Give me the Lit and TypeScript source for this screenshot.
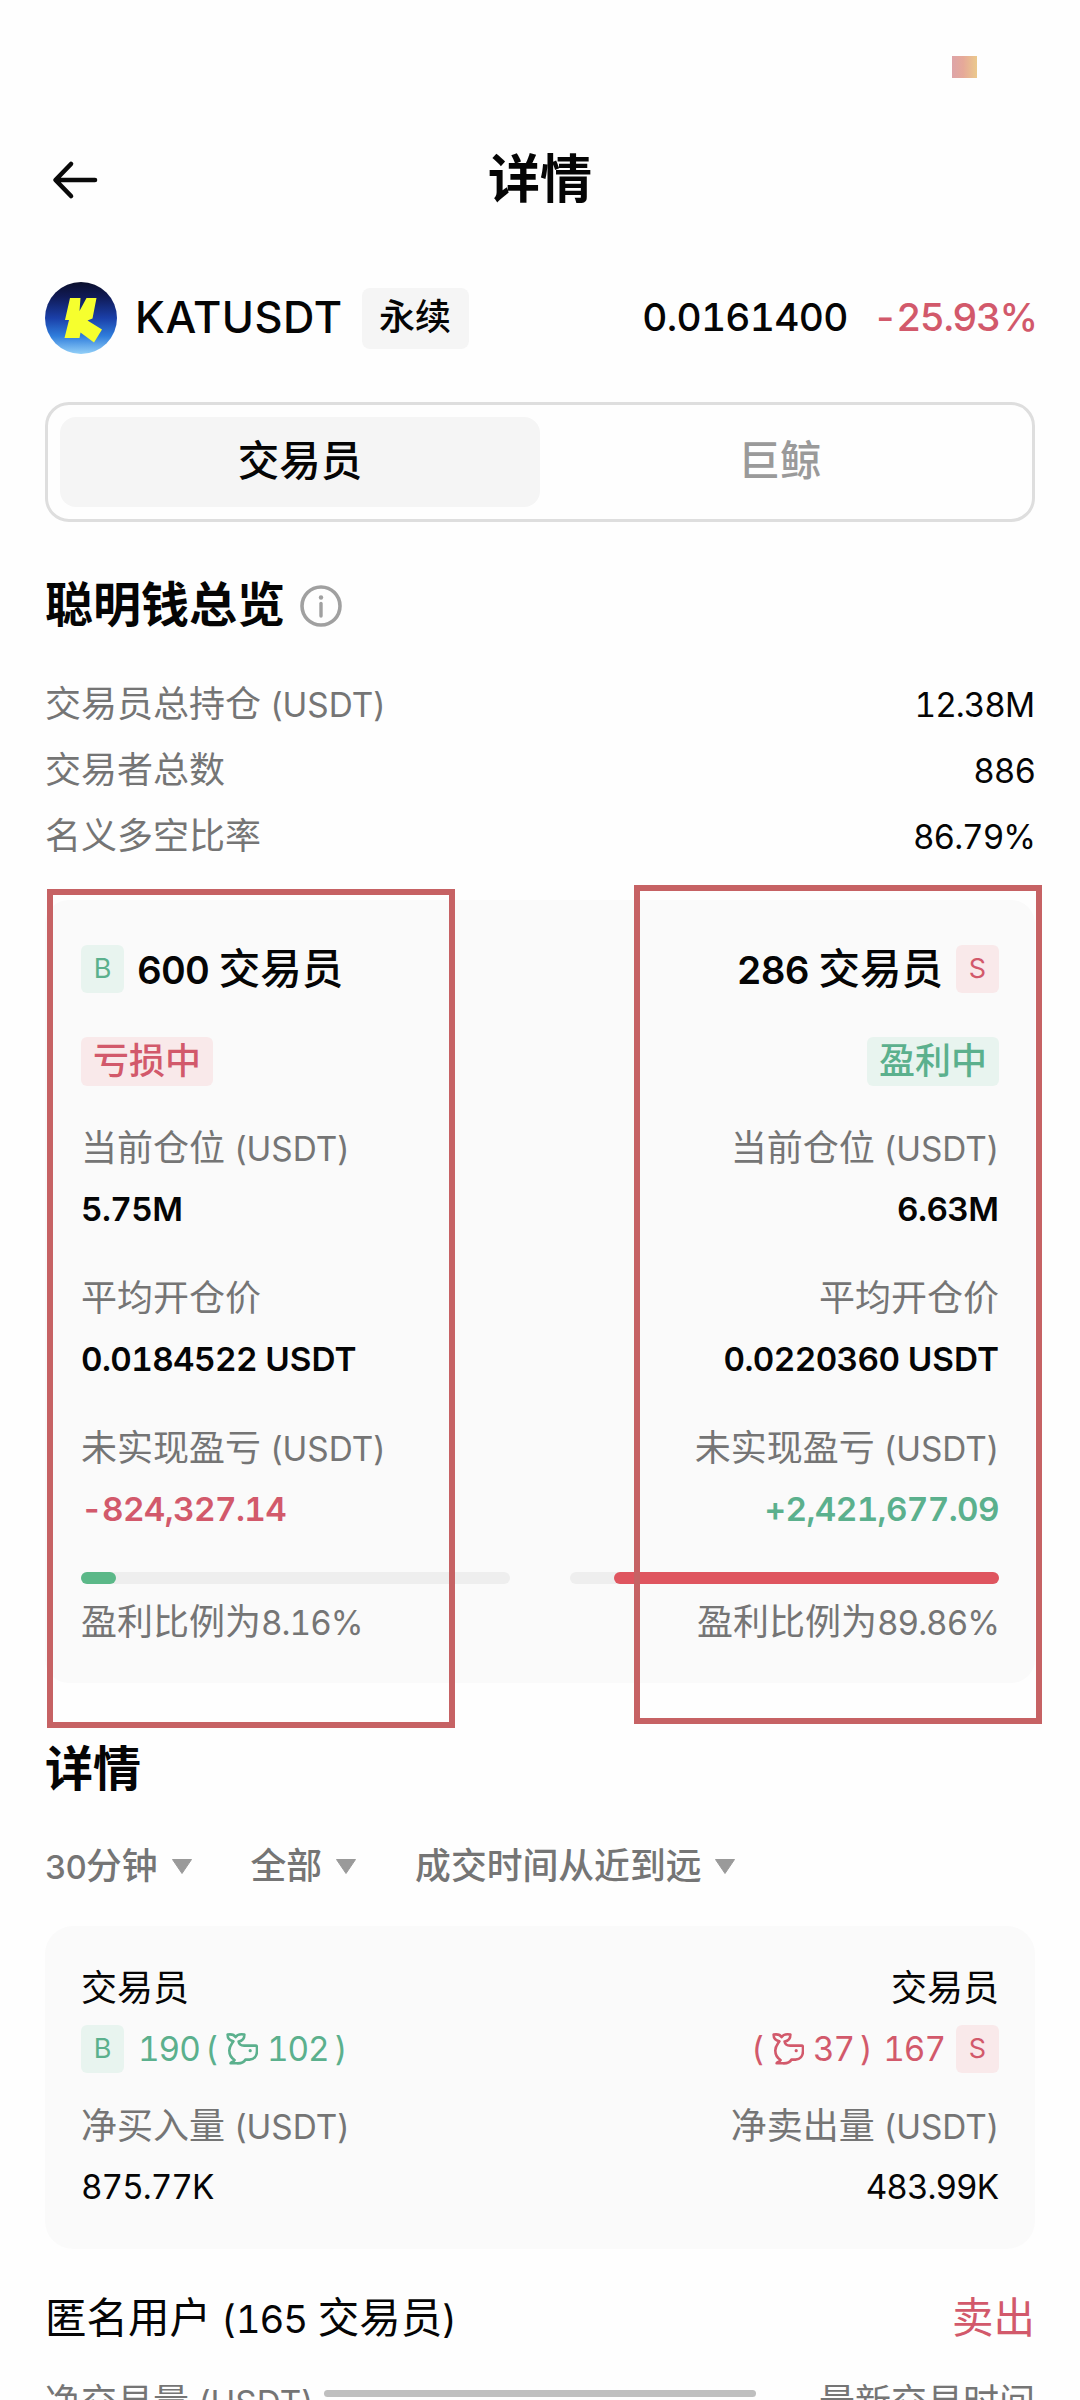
import { LitElement, html, css, svg } from "lit";
import { customElement, property } from "lit/decorators.js";
import { classMap } from "lit/directives/class-map.js";

/** Splits a text into CJK, numeric and Latin runs so that each kind gets its own metrics. */
const mix = (text: string) =>
  text
    .split(/([\u3400-\u9fff]+|[0-9.,%+-]+)/)
    .filter((run) => run.length > 0)
    .map((run) =>
      /[\u3400-\u9fff]/.test(run)
        ? run
        : html`<span class=${classMap({ latin: true, digits: /[0-9]/.test(run) })}>${run}</span>`
    );

const shared = css`
  * {
    box-sizing: border-box;
  }
  .latin {
    font-family: Inter, "Open Sans", sans-serif;
    font-size: 0.925em;
    line-height: 0;
    white-space: pre;
  }
  .digits {
    font-variant-numeric: tabular-nums;
    letter-spacing: -0.03em;
  }
`;

const whale = svg`
  <path d="M1.6 1.6C5 1 8 1.4 9.6 4.2C11.2 1.4 15 1 18.4 1.6C18.4 5.2 16.6 8 12.6 8.6C13 11 15 12.6 18 12.6H29.4C30.4 12.6 31 13.2 31 14.2V18C31 23 28 26.6 23.5 26.6H19.4C18 29.4 15 30.6 10.5 30.3H4.6C5.4 28.4 8 28.8 8.6 27C4.6 24.6 3.3 21 3.3 17.5C3.3 13.4 5.6 11.2 7.4 8.3C3.6 7.6 1.6 5.2 1.6 1.6Z"
    fill="none" stroke="currentColor" stroke-width="2.6" stroke-linejoin="round"/>
  <circle cx="24.2" cy="17.7" r="1.6" fill="currentColor"/>`;

@customElement("side-badge")
class SideBadge extends LitElement {
  @property() side = "B";
  static styles = css`
    :host {
      display: block;
    }
    .badge {
      width: 43px;
      height: 48px;
      border-radius: 6px;
      display: flex;
      align-items: center;
      justify-content: center;
      font-family: Inter, "Open Sans", sans-serif;
      font-size: 27px;
      font-weight: 400;
      line-height: 48px;
    }
    .buy {
      background: #e8f4ef;
      color: #5bb08d;
    }
    .sell {
      background: #f9e9ea;
      color: #d2596b;
    }
  `;
  render() {
    const buy = this.side === "B";
    return html`<div class=${classMap({ badge: true, buy, sell: !buy })}>${this.side}</div>`;
  }
}

interface Side {
  side: string;
  count: string;
  status: string;
  gain: boolean;
  position: string;
  entry: string;
  pnl: string;
  ratio: number;
}

@customElement("side-column")
class SideColumn extends LitElement {
  @property({ attribute: false }) data!: Side;
  static styles = [
    shared,
    css`
      :host {
        display: block;
        flex: 1;
      }
      .col {
        display: flex;
        flex-direction: column;
        align-items: flex-start;
      }
      .short {
        align-items: flex-end;
      }
      .head {
        display: flex;
        align-items: center;
        gap: 13px;
        height: 49px;
        line-height: 47px;
        font-size: 41.5px;
        font-weight: 500;
        white-space: nowrap;
      }
      .short .head {
        flex-direction: row-reverse;
      }
      .head .latin {
        font-weight: 600;
      }
      .head .digits {
        letter-spacing: -0.022em;
      }
      .tag {
        margin-top: 44px;
        height: 49px;
        line-height: 47px;
        padding: 0 12px;
        border-radius: 6px;
        font-size: 36px;
        font-weight: 500;
      }
      .tag.gain {
        background: #e8f4ef;
      }
      .tag.loss {
        background: #f9e9ea;
      }
      .gain {
        color: #5bb08d;
      }
      .loss {
        color: #d2596b;
      }
      .metrics {
        margin-top: 32px;
        display: flex;
        flex-direction: column;
        gap: 30px;
        align-items: inherit;
      }
      .metric {
        display: flex;
        flex-direction: column;
        align-items: inherit;
        line-height: 60px;
      }
      .label,
      .ratio {
        height: 60px;
        font-size: 36px;
        color: #757575;
        white-space: nowrap;
      }
      .value {
        height: 60px;
        font-size: 36px;
        font-weight: 600;
      }
      .value .digits {
        letter-spacing: -0.018em;
      }
      .bar {
        margin-top: 34px;
        width: 100%;
        height: 12px;
        border-radius: 6px;
        background: #eeeeee;
        display: flex;
      }
      .short .bar {
        justify-content: flex-end;
      }
      .fill {
        border-radius: 6px;
        background: #5bb888;
      }
      .short .fill {
        background: #df555f;
      }
      .ratio {
        margin-top: 8px;
        line-height: 60px;
      }
    `,
  ];
  render() {
    const d = this.data;
    const tone = { gain: d.gain, loss: !d.gain };
    return html`<div class=${classMap({ col: true, short: d.side === "S" })}>
      <div class="head">
        <side-badge side=${d.side}></side-badge>
        <div>${mix(`${d.count} 交易员`)}</div>
      </div>
      <div class=${classMap({ tag: true, ...tone })}>${d.status}</div>
      <div class="metrics">
        <div class="metric">
          <div class="label">${mix("当前仓位 (USDT)")}</div>
          <div class="value">${mix(d.position)}</div>
        </div>
        <div class="metric">
          <div class="label">${mix("平均开仓价")}</div>
          <div class="value">${mix(d.entry)}</div>
        </div>
        <div class="metric">
          <div class="label">${mix("未实现盈亏 (USDT)")}</div>
          <div class=${classMap({ value: true, ...tone })}>${mix(d.pnl)}</div>
        </div>
      </div>
      <div class="bar"><div class="fill" style="width:${d.ratio}%"></div></div>
      <div class="ratio">${mix(`盈利比例为${d.ratio}%`)}</div>
    </div>`;
  }
}

@customElement("app-root")
class AppRoot extends LitElement {
  static styles = [
    shared,
    css`
      :host {
        display: block;
        position: relative;
        width: 1080px;
        height: 2400px;
        overflow: hidden;
        background: #fefefe;
        color: #050505;
        font-family: "Open Sans", "Noto Sans CJK SC", sans-serif;
        font-size: 36px;
      }
      .page {
        display: flex;
        flex-direction: column;
        padding: 0 45px;
      }
      .status {
        height: 118px;
        display: flex;
        justify-content: flex-end;
        padding: 56px 58px 0 0;
      }
      .pixel {
        width: 25px;
        height: 22px;
        background: linear-gradient(90deg, #dda4a8, #e6a999 45%, #ebc98c);
      }
      .header {
        height: 120px;
        display: grid;
        grid-template-columns: 1fr auto 1fr;
        align-items: center;
      }
      .back {
        width: 60px;
        height: 60px;
      }
      .title {
        font-size: 52px;
        font-weight: 700;
        line-height: 76px;
      }
      .pair {
        height: 160px;
        display: flex;
        align-items: center;
        line-height: 60px;
      }
      .logo {
        width: 72px;
        height: 72px;
      }
      .symbol {
        margin-left: 18px;
        padding-bottom: 6px;
        font-size: 47px;
        font-weight: 500;
        letter-spacing: 0.5px;
      }
      .perp {
        margin-left: 19px;
        width: 107px;
        height: 61px;
        line-height: 58px;
        text-align: center;
        background: #f5f5f5;
        border-radius: 8px;
        font-weight: 500;
      }
      .price {
        margin-left: auto;
        padding-bottom: 6px;
        font-size: 42px;
        font-weight: 500;
      }
      .price .digits {
        letter-spacing: -0.018em;
      }
      .change {
        margin-left: 25px;
        padding-bottom: 6px;
        font-size: 42px;
        font-weight: 500;
        color: #d2596b;
      }
      .change .digits {
        letter-spacing: -0.04em;
        margin-right: -0.04em;
      }
      .tabs {
        margin-top: 4px;
        height: 120px;
        border: 3px solid #dedede;
        border-radius: 24px;
        padding: 12px;
        display: flex;
      }
      .tab {
        flex: 1;
        border-radius: 16px;
        text-align: center;
        line-height: 86px;
        font-size: 41.5px;
        font-weight: 500;
        color: #9a9a9a;
      }
      .tab.active {
        background: #f5f5f5;
        color: #050505;
      }
      .section {
        height: 60px;
        line-height: 60px;
        font-size: 48px;
        font-weight: 700;
        display: flex;
        align-items: center;
        gap: 15px;
      }
      .overview {
        margin-top: 52px;
      }
      .info {
        width: 42px;
        height: 42px;
        margin-top: 4px;
      }
      .stats {
        margin-top: 37px;
      }
      .stat {
        height: 66px;
        line-height: 66px;
        display: flex;
        justify-content: space-between;
      }
      .muted {
        color: #757575;
      }
      .compare {
        position: relative;
        margin-top: 31px;
        height: 783px;
        padding: 44px 36px 0;
        border-radius: 24px;
        background: #fafafa;
        display: flex;
        gap: 60px;
      }
      .frame {
        position: absolute;
        width: 408px;
        height: 839px;
        border: 6px solid #c66264;
      }
      .frame-long {
        left: 2px;
        top: -11px;
      }
      .frame-short {
        left: 589px;
        top: -15px;
      }
      .details {
        margin-top: 55px;
      }
      .filters {
        margin-top: 37px;
        height: 60px;
        line-height: 60px;
        display: flex;
        gap: 58px;
        color: #757575;
        font-weight: 500;
        font-size: 35.8px;
      }
      .filter {
        display: flex;
        align-items: center;
        gap: 13px;
      }
      .caret {
        width: 22px;
        height: 15px;
        margin-top: 3px;
      }
      .flow {
        margin-top: 31px;
        height: 323px;
        padding: 32px 36px 0;
        border-radius: 28px;
        background: #fafafa;
        display: flex;
        justify-content: space-between;
        line-height: 60px;
      }
      .side {
        display: flex;
        flex-direction: column;
      }
      .side.end {
        align-items: flex-end;
      }
      .tally {
        height: 61px;
        display: flex;
        align-items: center;
      }
      .tally span {
        padding-bottom: 2px;
      }
      .buy {
        color: #5bb08d;
      }
      .sell {
        color: #d2596b;
      }
      .whale {
        width: 32px;
        height: 32px;
        margin: 0 9px 0 8px;
      }
      .gap-l {
        margin-left: 14px;
      }
      .gap-m {
        margin-left: 11px;
      }
      .gap-s {
        margin-left: 6px;
      }
      .flow-label {
        margin-top: 17px;
      }
      .user {
        margin-top: 38px;
        height: 60px;
        line-height: 60px;
        font-size: 41.5px;
        display: flex;
        justify-content: space-between;
      }
      .last {
        margin-top: 25px;
        height: 28px;
        line-height: 60px;
        display: flex;
        justify-content: space-between;
      }
      .home {
        position: absolute;
        left: 324px;
        bottom: 3px;
        width: 432px;
        height: 7px;
        border-radius: 4px;
        background: #bfbfbf;
      }
    `,
  ];

  private sides: Side[] = [
    {
      side: "B",
      count: "600",
      status: "亏损中",
      gain: false,
      position: "5.75M",
      entry: "0.0184522 USDT",
      pnl: "-824,327.14",
      ratio: 8.16,
    },
    {
      side: "S",
      count: "286",
      status: "盈利中",
      gain: true,
      position: "6.63M",
      entry: "0.0220360 USDT",
      pnl: "+2,421,677.09",
      ratio: 89.86,
    },
  ];

  private stats = [
    ["交易员总持仓 (USDT)", "12.38M"],
    ["交易者总数", "886"],
    ["名义多空比率", "86.79%"],
  ];

  private filters = ["30分钟", "全部", "成交时间从近到远"];

  render() {
    return html`
      <div class="page">
        <div class="status"><div class="pixel"></div></div>
        <div class="header">
          <svg class="back" viewBox="0 0 60 60" fill="none" stroke="#0a0a0a" stroke-width="4.6" stroke-linecap="round" stroke-linejoin="round">
            <path d="M26 16L10.500 32L26 48M11 32H50" />
          </svg>
          <div class="title">详情</div>
        </div>
        <div class="pair">
          <svg class="logo" viewBox="0 0 72 72">
            <defs>
              <linearGradient id="sky" x1="0" y1="0" x2="0" y2="1">
                <stop offset="0" stop-color="#0b0f2c" />
                <stop offset="0.2" stop-color="#101a55" />
                <stop offset="0.5" stop-color="#1a3fa8" />
                <stop offset="0.75" stop-color="#2f7ddc" />
                <stop offset="1" stop-color="#93d0f8" />
              </linearGradient>
            </defs>
            <circle cx="36" cy="36" r="36" fill="url(#sky)" />
            <path d="M25 16H35.500L34.500 29L41.500 16H51.500L47.500 36.500L42.500 38.500L57 47.500L49 60.500L35.500 50.500L34.500 56H19.500L24 38H20Z" fill="#f6ff2e" />
          </svg>
          <div class="symbol">${mix("KATUSDT")}</div>
          <div class="perp">永续</div>
          <div class="price">${mix("0.0161400")}</div>
          <div class="change">${mix("-25.93%")}</div>
        </div>
        <div class="tabs">
          <div class="tab active">交易员</div>
          <div class="tab">巨鲸</div>
        </div>
        <div class="section overview">
          <span>聪明钱总览</span>
          <svg class="info" viewBox="0 0 42 42" fill="none" stroke="#a0a0a0">
            <circle cx="21" cy="21" r="19" stroke-width="3.600" />
            <path d="M21 18.500V31" stroke-width="3.400" stroke-linecap="round" />
            <circle cx="21" cy="12.500" r="2.200" fill="#a0a0a0" stroke="none" />
          </svg>
        </div>
        <div class="stats">
          ${this.stats.map(
            ([label, value]) => html`<div class="stat">
              <span class="muted">${mix(label)}</span><span>${mix(value)}</span>
            </div>`
          )}
        </div>
        <div class="compare">
          ${this.sides.map((s) => html`<side-column .data=${s}></side-column>`)}
          <div class="frame frame-long"></div>
          <div class="frame frame-short"></div>
        </div>
        <div class="section details">详情</div>
        <div class="filters">
          ${this.filters.map(
            (f) => html`<div class="filter">
              <span>${mix(f)}</span>
              <svg class="caret" viewBox="0 0 22 15"><path d="M1.500 0.500H20.500L11 14.500Z" fill="#9a9a9a" stroke="#9a9a9a" stroke-linejoin="round" /></svg>
            </div>`
          )}
        </div>
        <div class="flow">
          <div class="side">
            <div>交易员</div>
            <div class="tally buy">
              <side-badge side="B"></side-badge>
              <span class="gap-l">${mix("190")}</span>
              <span class="gap-s">${mix("(")}</span>
              <svg class="whale" viewBox="0 0 32 32">${whale}</svg>
              <span>${mix("102")}</span>
              <span class="gap-s">${mix(")")}</span>
            </div>
            <div class="muted flow-label">${mix("净买入量 (USDT)")}</div>
            <div>${mix("875.77K")}</div>
          </div>
          <div class="side end">
            <div>交易员</div>
            <div class="tally sell">
              <span>${mix("(")}</span>
              <svg class="whale" viewBox="0 0 32 32">${whale}</svg>
              <span>${mix("37")}</span>
              <span class="gap-s">${mix(")")}</span>
              <span class="gap-m">${mix("167")}</span>
              <side-badge class="gap-m" side="S"></side-badge>
            </div>
            <div class="muted flow-label">${mix("净卖出量 (USDT)")}</div>
            <div>${mix("483.99K")}</div>
          </div>
        </div>
        <div class="user">
          <span>${mix("匿名用户 (165 交易员)")}</span>
          <span class="sell">卖出</span>
        </div>
        <div class="last muted">
          <span>${mix("净交易量 (USDT)")}</span>
          <span>最新交易时间</span>
        </div>
      </div>
      <div class="home"></div>
    `;
  }
}
